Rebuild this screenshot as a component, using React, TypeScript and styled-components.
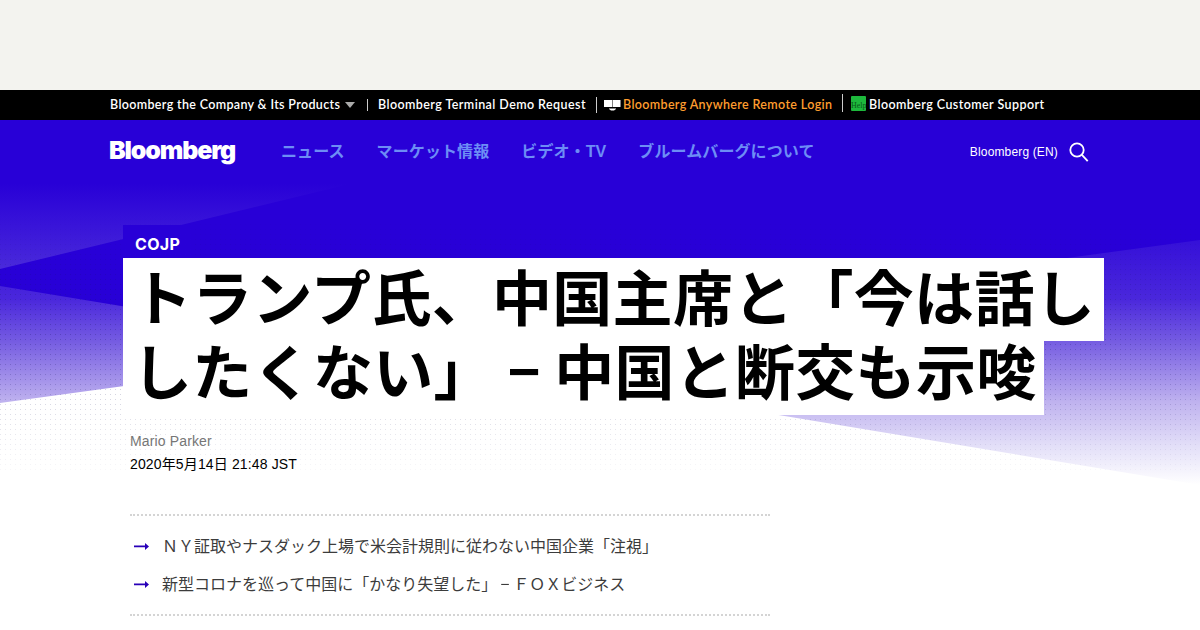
import styled, { createGlobalStyle } from 'styled-components';

const GlobalStyle = createGlobalStyle`
  * {
    box-sizing: border-box;
  }

  body {
    margin: 0;
    background: #fff;
    font-family: "Liberation Sans", "Noto Sans CJK JP", sans-serif;
    overflow-x: hidden;
  }
`;

const AdSlot = styled.div`
  height: 90px;
  background: #f3f3ef;
`;

const TopBar = styled.div`
  display: flex;
  align-items: center;
  height: 30px;
  padding-left: 110px;
  background: #000;
`;

const TopLink = styled.a<{ $color?: string; $spacing: number; $width: number }>`
  display: flex;
  flex: none;
  align-items: center;
  width: ${(props) => props.$width}px;
  color: ${(props) => props.$color || '#fff'};
  font: 600 12.5px/30px Lato, sans-serif;
  letter-spacing: ${(props) => props.$spacing}px;
  white-space: nowrap;

  svg {
    flex: none;
    margin-right: 2px;
  }
`;

const Divider = styled.span<{ $left: number; $right: number; $height: number; $lift?: number }>`
  flex: none;
  width: 1px;
  height: ${(props) => props.$height}px;
  margin: 0 ${(props) => props.$right}px ${(props) => props.$lift || 0}px ${(props) => props.$left}px;
  background: #ccc;
`;

const Caret = styled.span`
  margin-left: auto;
  border: 5px solid transparent;
  border-top: 6px solid #aaa;
  border-bottom: 0;
`;

const HelpBadge = styled.span`
  flex: none;
  width: 15px;
  height: 15px;
  margin: 0 3px 4px 0;
  padding-top: 6px;
  overflow: hidden;
  border-radius: 1px;
  background: #1db83c;
  color: #0a5a1b;
  font: 8px/8px "Liberation Serif", serif;
  letter-spacing: 0;
  text-align: center;
`;

const Header = styled.header`
  position: relative;
  display: flex;
  align-items: center;
  height: 64px;
  padding: 0 111px 0 109px;
  background: #2800d7;
`;

const Logo = styled.a`
  width: 172px;
  padding-bottom: 4px;
  color: #fff;
  font: 900 25px/30px Inter, sans-serif;
  letter-spacing: -1.15px;
`;

const Nav = styled.nav`
  display: flex;
  flex: 1;
  gap: 32px;
`;

const NavLink = styled.a`
  color: #6d8df5;
  font-size: 16px;
  font-weight: 700;
  line-height: 24px;
  letter-spacing: 0.1px;
  white-space: nowrap;
`;

const Edition = styled.a`
  margin-right: 11px;
  color: #fff;
  font-size: 12px;
  letter-spacing: 0.15px;
`;

const Hero = styled.section`
  position: relative;
  height: 306px;
  padding: 41px 0 0 123px;
`;

const Backdrop = styled.svg`
  position: absolute;
  top: 0;
  left: 0;
  z-index: -1;
`;

const Eyebrow = styled.div`
  width: 69px;
  height: 33px;
  padding-left: 12px;
  background: #2800d7;
  color: #fff;
  font: 700 16px/38px Inter, sans-serif;
  letter-spacing: 0.3px;
`;

const Title = styled.h1`
  display: flex;
  flex-direction: column;
  align-items: flex-start;
  margin: 0;
  font-size: 60px;
  font-weight: 700;
  letter-spacing: 0.3px;
`;

const TitleLine = styled.span<{ $height: number; $width: number; $leading: number }>`
  width: ${(props) => props.$width}px;
  height: ${(props) => props.$height}px;
  padding-left: 9px;
  background: #fff;
  color: #000;
  line-height: ${(props) => props.$leading}px;
  white-space: nowrap;
`;

const Dash = styled.span`
  display: inline-block;
  line-height: 1;
  transform: scaleX(0.66);
`;

const Byline = styled.div`
  padding: 15px 0 0 7px;
  color: #767676;
  font-size: 14px;
  line-height: 23px;
  letter-spacing: 0.14px;
`;

const Published = styled.time`
  display: block;
  color: #000;
`;

const Summary = styled.ul`
  width: 640px;
  height: 102px;
  margin: 24px 0 0 130px;
  padding: 12px 0 0;
  border: dotted #d4d4d4;
  border-width: 2px 0;
  list-style: none;
`;

const SummaryItem = styled.li`
  display: flex;
  align-items: center;
  height: 38px;
  padding-left: 4px;
  gap: 13px;
  color: #3c3c3c;
  font-size: 16px;
  white-space: nowrap;
`;

const SummaryText = styled.span`
  padding-bottom: 4px;
`;

const navLinks = ['ニュース', 'マーケット情報', 'ビデオ・TV', 'ブルームバーグについて'];

const summary = [
  ['ＮＹ証取やナスダック上場で米会計規則に従わない中国企業「注視」'],
  ['新型コロナを巡って中国に「かなり失望した」', 'ＦＯＸビジネス'],
];

const TerminalIcon = () => (
  <svg width="17" height="11" viewBox="0 0 17 11" fill="#fff">
    <rect width="8" height="7" />
    <rect x="8.500" width="8" height="7" />
    <path d="M5 8.500h7v.5l-2 1.500H7L5 9z" />
  </svg>
);

const SearchIcon = () => (
  <svg width="20" height="20" viewBox="0 0 20 20" fill="none" stroke="#fff" strokeWidth="1.8">
    <circle cx="8" cy="8" r="6.700" />
    <path d="M12.700 12.700l6 6.500" />
  </svg>
);

const ArrowIcon = () => (
  <svg width="15" height="8" viewBox="0 0 15 8" fill="#2800b8">
    <path d="M0 2.500h11V0L15 3.500 11 7V4.300H0z" />
  </svg>
);

const HeroBackdrop = () => (
  <Backdrop width="1200" height="306" viewBox="0 184 1200 306">
    <defs>
      <linearGradient id="upper" gradientUnits="userSpaceOnUse" x1="0" y1="184" x2="0" y2="272">
        <stop offset="0" stopColor="#2800d7" />
        <stop offset="1" stopColor="#4b2bdb" />
      </linearGradient>
      <linearGradient id="fade" gradientUnits="userSpaceOnUse" x1="0" y1="240" x2="0" y2="485">
        <stop offset="0" stopColor="#3510d8" />
        <stop offset="0.24" stopColor="#4a27dc" />
        <stop offset="0.42" stopColor="#775ee2" />
        <stop offset="0.66" stopColor="#bfb2ef" />
        <stop offset="0.84" stopColor="#e3dff8" />
        <stop offset="1" stopColor="#fff" />
      </linearGradient>
      <linearGradient id="dotFade" gradientUnits="userSpaceOnUse" x1="0" y1="210" x2="0" y2="474">
        <stop offset="0" stopColor="#fff" stopOpacity="0" />
        <stop offset="0.4" stopColor="#fff" />
        <stop offset="0.65" stopColor="#fff" stopOpacity="0.75" />
        <stop offset="1" stopColor="#fff" stopOpacity="0.1" />
      </linearGradient>
      <pattern id="dots" width="5" height="5" patternUnits="userSpaceOnUse">
        <rect width="1" height="1" y="4" fill="#1a1a5a" fillOpacity="0.28" />
      </pattern>
      <mask id="dotMask" maskUnits="userSpaceOnUse" x="0" y="184" width="1200" height="306">
        <rect y="184" width="1200" height="290" fill="url(#dotFade)" />
      </mask>
    </defs>
    {/* the base runs a little under the fades so their edges stay clean */}
    <path d="M0 184H1200V250L388 350L0 296z" fill="#2800d7" />
    <path d="M0 184H350L0 269z" fill="url(#upper)" />
    <path d="M0 286L388 350L0 403z" fill="url(#fade)" />
    <path d="M1200 240L388 350L1200 485z" fill="url(#fade)" />
    <rect y="184" width="1200" height="290" fill="url(#dots)" mask="url(#dotMask)" />
  </Backdrop>
);

const App = () => (
  <>
    <GlobalStyle />
    <AdSlot />
    <TopBar>
      <TopLink $spacing={0.34} $width={245}>
        Bloomberg the Company &amp; Its Products
        <Caret />
      </TopLink>
      <Divider $left={12} $right={10} $height={12} />
      <TopLink $spacing={0.42} $width={208}>Bloomberg Terminal Demo Request</TopLink>
      <Divider $left={10} $right={7} $height={16} />
      <TopLink $spacing={0.35} $width={228} $color="#ff9d2e">
        <TerminalIcon />
        Bloomberg Anywhere Remote Login
      </TopLink>
      <Divider $left={10} $right={8} $height={18} $lift={5} />
      <TopLink $spacing={0.42} $width={194}>
        <HelpBadge>Help</HelpBadge>
        Bloomberg Customer Support
      </TopLink>
    </TopBar>
    <Header>
      <Logo>Bloomberg</Logo>
      <Nav>
        {navLinks.map((label) => (
          <NavLink key={label}>{label}</NavLink>
        ))}
      </Nav>
      <Edition>Bloomberg (EN)</Edition>
      <SearchIcon />
    </Header>
    <Hero>
      <HeroBackdrop />
      <Eyebrow>COJP</Eyebrow>
      <Title>
        <TitleLine $width={981} $height={83} $leading={85}>トランプ氏、中国主席と「今は話し</TitleLine>
        <TitleLine $width={921} $height={74} $leading={67}>
          したくない」<Dash>－</Dash>中国と断交も示唆
        </TitleLine>
      </Title>
      <Byline>
        Mario Parker
        <Published>2020年5月14日 21:48 JST</Published>
      </Byline>
    </Hero>
    <Summary>
      {summary.map(([text, source]) => (
        <SummaryItem key={text}>
          <ArrowIcon />
          <SummaryText>
            {text}
            {source && <Dash>－</Dash>}
            {source}
          </SummaryText>
        </SummaryItem>
      ))}
    </Summary>
  </>
);

export default App;
